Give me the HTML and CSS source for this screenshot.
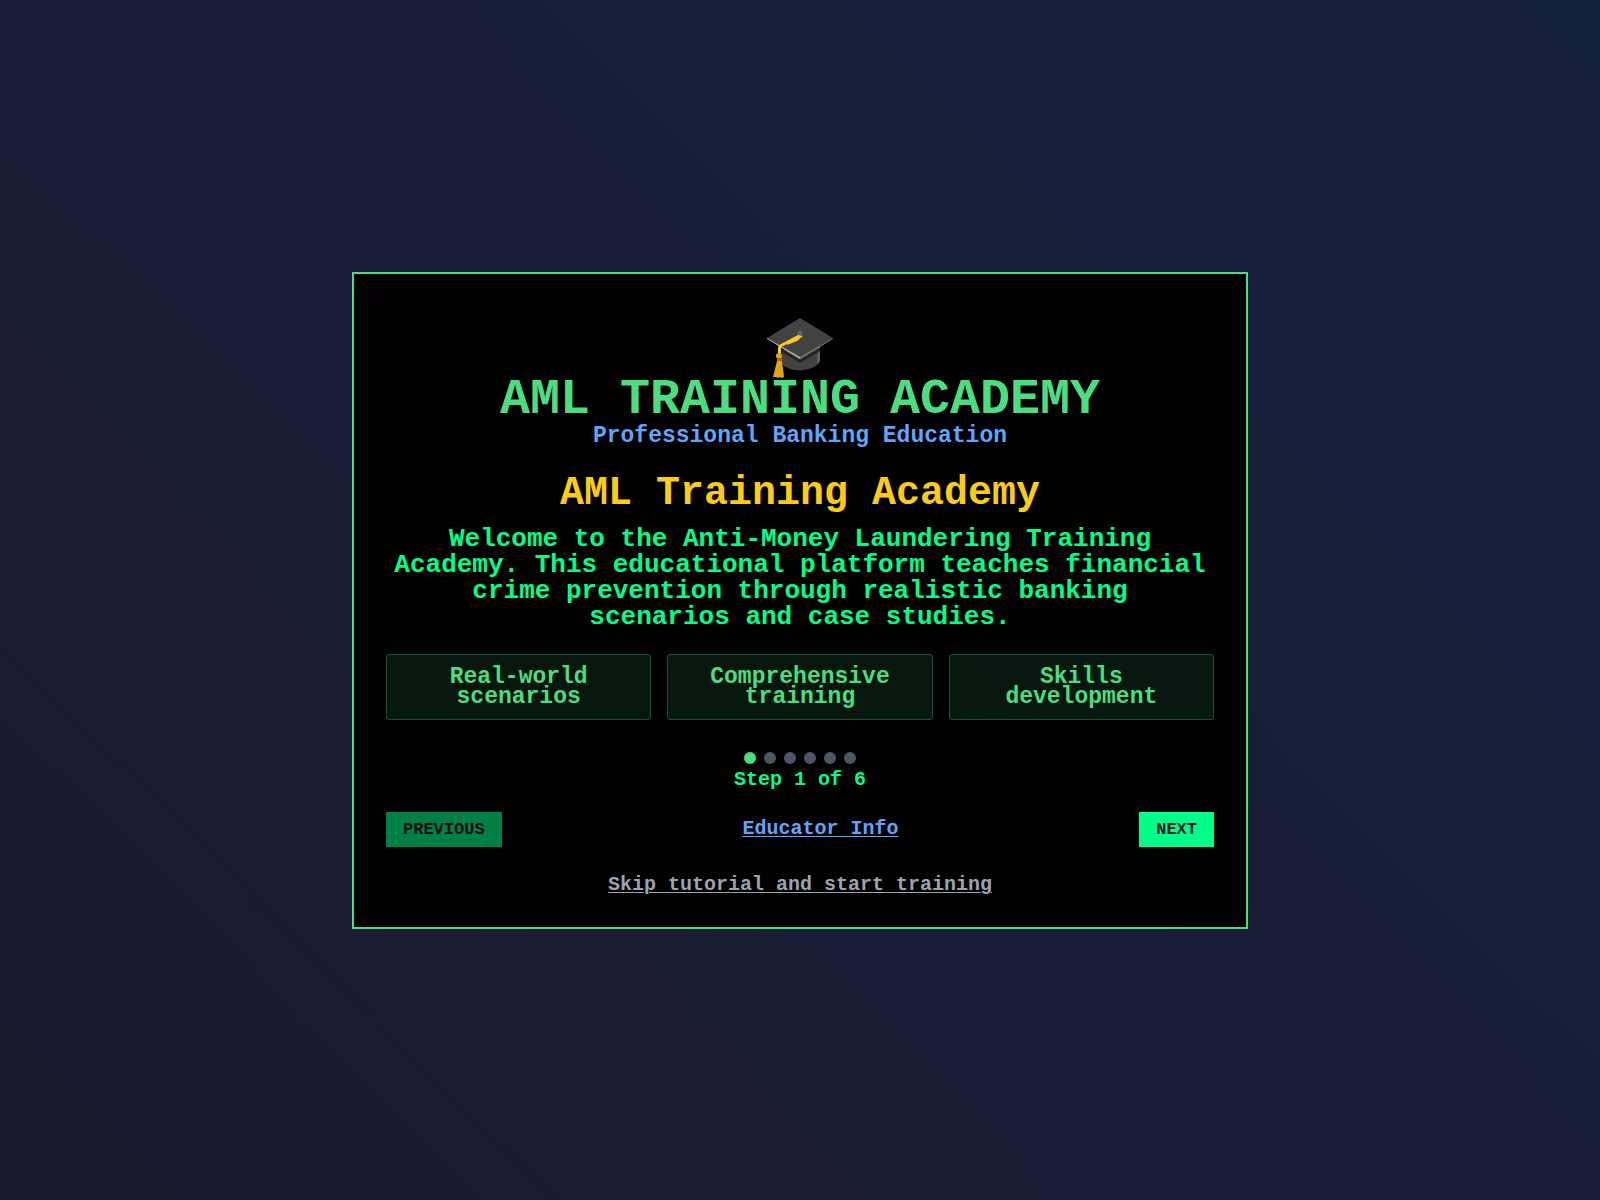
FILE: index.html
```html
<!DOCTYPE html>
<html lang="en">
<head>
  <meta charset="UTF-8">
  <meta name="viewport" content="width=device-width, initial-scale=1.0">
  <title>AML Training Academy</title>
  <link rel="stylesheet" href="styles.css">
</head>
<body>
  <main class="card">
    <header class="card-header">
      <svg class="logo" viewBox="0 0 66 60" aria-hidden="true">
        <path d="M15 32v14c8 9 29 8 37-1l1-2V27z" fill="#424242"/>
        <path d="M51 30l2-1v14l-3 3z" fill="#616161"/>
        <path d="M15 31l18 11 20-12v3L33 45 15 34z" fill="#212121"/>
        <path d="M0 20L33 0l33 20-33 20z" fill="#424242"/>
        <path d="M0 20l33 19v2L0 21z" fill="#b0b0b0"/>
        <path d="M33 39l33-19v1L33 41z" fill="#757575"/>
        <path d="M11 37v-7c0-2 1-3 3-4l17-9 5 1-2 1-18 9c-2 1-2 2-2 4v6z" fill="#ffca28"/>
        <path d="M21 25l15-7-6 5-10 4z" fill="#ffca28"/>
        <ellipse cx="33" cy="15" rx="3" ry="2" fill="#616161"/>
        <circle cx="12" cy="38" r="3" fill="#e2a610"/>
        <path d="M10 40h5v3h-5z" fill="#9a6b00"/>
        <path d="M10 43h5l2 16-3 1-1-1-2 1-2-1-3 0z" fill="#e2a610"/>
      </svg>
      <h1>AML TRAINING ACADEMY</h1>
      <p class="subtitle">Professional Banking Education</p>
    </header>

    <section class="step">
      <h2>AML Training Academy</h2>
      <p class="description">
        Welcome to the Anti-Money Laundering Training<br>
        Academy. This educational platform teaches financial<br>
        crime prevention through realistic banking<br>
        scenarios and case studies.
      </p>
      <ul class="features">
        <li>Real-world scenarios</li>
        <li>Comprehensive training</li>
        <li>Skills development</li>
      </ul>
    </section>

    <div class="progress">
      <div class="dots">
        <span class="dot active"></span>
        <span class="dot"></span>
        <span class="dot"></span>
        <span class="dot"></span>
        <span class="dot"></span>
        <span class="dot"></span>
      </div>
      <p class="step-count">Step 1 of 6</p>
    </div>

    <div class="controls">
      <button class="btn" type="button" disabled>PREVIOUS</button>
      <button class="link-button info" type="button">Educator Info</button>
      <button class="btn" type="button">NEXT</button>
    </div>

    <button class="link-button skip" type="button">Skip tutorial and start training</button>
  </main>
</body>
</html>
```
FILE: styles.css
```css
* {
  box-sizing: border-box;
  margin: 0;
  padding: 0;
}

body {
  display: flex;
  align-items: center;
  justify-content: center;
  min-height: 100vh;
  padding: 16px;
  background: linear-gradient(45deg, #1a1a2e, #16213e);
  color: #00ff88;
  font-family: "Liberation Mono", monospace;
  font-weight: bold;
  text-align: center;
}

.card {
  width: 100%;
  max-width: 896px;
  padding: 32px;
  border: 2px solid #4ade80;
  background: rgba(0, 0, 0, 0.95);
}

.card-header {
  padding-top: 12px;
  margin-bottom: 24px;
}

.logo {
  display: block;
  width: 66px;
  height: 60px;
  margin: 0 auto;
}

h1 {
  color: #4ade80;
  font-size: 50px;
  line-height: 44px;
}

.subtitle {
  color: #60a5fa;
  font-size: 23px;
  line-height: 28px;
}

h2 {
  margin-bottom: 12px;
  color: #facc15;
  font-size: 40px;
  line-height: 40px;
}

.description {
  margin-bottom: 24px;
  font-size: 26px;
  line-height: 26px;
}

.features {
  display: grid;
  grid-template-columns: repeat(3, 1fr);
  gap: 16px;
  list-style: none;
}

.features li {
  padding: 12px;
  border: 1px solid rgba(74, 222, 128, 0.3);
  border-radius: 4px;
  background: rgba(74, 222, 128, 0.1);
  color: #4ade80;
  font-size: 23px;
  line-height: 20px;
}

.progress {
  margin: 32px 0 20px;
}

.dots {
  display: flex;
  justify-content: center;
  gap: 8px;
  margin-bottom: 4px;
}

.dot {
  width: 12px;
  height: 12px;
  border-radius: 50%;
  background: #4b5563;
}

.dot.active {
  background: #4ade80;
}

.step-count {
  font-size: 20px;
  line-height: 24px;
}

.controls {
  display: flex;
  align-items: center;
  justify-content: space-between;
  margin-bottom: 28px;
}

button {
  border: none;
  font-family: inherit;
  font-weight: inherit;
  cursor: pointer;
}

.btn {
  height: 35px;
  padding: 0 17px;
  background: #00ff88;
  color: #1a1a2e;
  font-size: 17px;
}

.btn:disabled {
  opacity: 0.5;
  cursor: not-allowed;
}

.link-button {
  background: none;
  font-size: 20px;
  line-height: 20px;
  text-decoration: underline;
  text-decoration-thickness: 1px;
  text-underline-offset: 2px;
}

.info {
  color: #60a5fa;
}

.skip {
  display: block;
  margin: 0 auto;
  color: #9ca3af;
}
```
